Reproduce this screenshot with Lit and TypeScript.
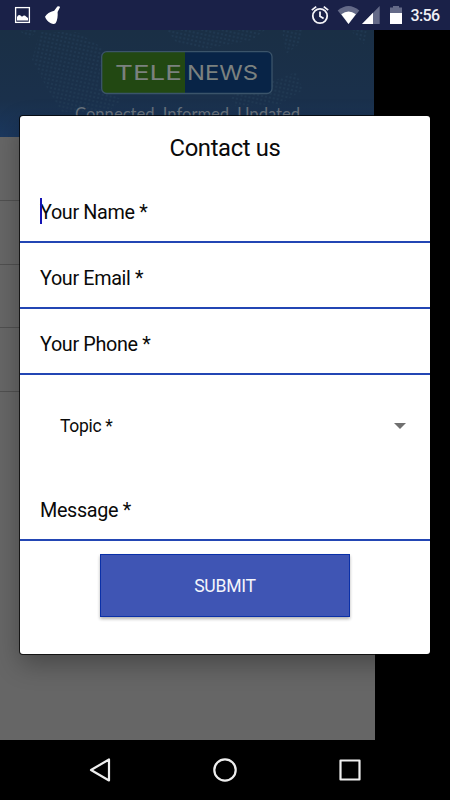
import { LitElement, html, css } from "lit";
import { customElement, property } from "lit/decorators.js";

@customElement("status-bar")
class StatusBar extends LitElement {
  static styles = css`
    :host { display: block; height: 30px; background: #1a2148; }
    svg { display: block; }
    .clock { font: 500 16px Roboto, sans-serif; fill: #f0f0f5; }
  `;
  render() {
    return html`<svg width="450" height="30" viewBox="0 0 450 30">
      <rect x="15.6" y="7.6" width="13.8" height="14.8" fill="none" stroke="#fff" stroke-width="1.3"/>
      <path d="M17 20.5V17Q18.5 13.8 20.5 15.5L22 16.8Q24.5 14.2 26 16.5L28 18V20.5Z" fill="#fff"/>
      <path d="M57.3 6.6Q59.6 5.4 60 7.3L57.6 12Q58.2 19 55.6 23.3Q53.8 24.8 50.8 23.2Q46.5 21 45 16.8Q47.5 12.2 54.2 10.7Z" fill="#fff"/>
      <g fill="none" stroke="#f4f4f8" stroke-width="1.8">
        <circle cx="320" cy="16" r="7.2"/>
        <path d="M320 11.5V16.2L323.6 18.6M311.8 10.1L316.2 6.6M323.8 6.6L328.2 10.1"/>
      </g>
      <path d="M337.7 10.6Q348.5 1.5 359.3 10.6L348.5 24Z" fill="#646a88"/>
      <path d="M341.3 14.2Q348.5 8.6 355.9 14.2L348.5 24Z" fill="#fff"/>
      <path d="M379.7 6V24H362Z" fill="#646a88"/>
      <path d="M373 12.8V24H362Z" fill="#fff"/>
      <path d="M390 13V7.5H393V6H399V7.5H402V13Z" fill="#646a88"/>
      <rect x="390" y="13" width="12" height="11" fill="#fff"/>
      <text class="clock" x="410.5" y="21" textLength="29.5">3:56</text>
    </svg>`;
  }
}

@customElement("brand-banner")
class BrandBanner extends LitElement {
  static styles = css`
    :host { display: block; height: 107px; background: linear-gradient(#1a2f45, #1a304b 65%, #1b385f); border-right: 1px solid #000; }
    svg { display: block; }
    .word { font: 400 20px Inter, Roboto, sans-serif; fill: #7b817f; }
    .tag { font: 400 17px Lato, Roboto, sans-serif; fill: #68727d; }
  `;
  render() {
    return html`<svg width="374" height="107" viewBox="0 0 374 107">
      <defs>
        <pattern id="dots" width="4" height="4" patternUnits="userSpaceOnUse" patternTransform="rotate(12)">
          <circle cx="2" cy="2" r="0.9" fill="#213b55"/>
        </pattern>
      </defs>
      <g fill="url(#dots)">
        <path d="M18 0H38L30 8ZM40 2H77L103 18L98 56L122 70L108 82H62L48 60L32 30Z"/>
        <path d="M167 0H265L252 10L205 19L176 12ZM230 66L260 56L296 42L303 60L280 74L235 76ZM282 0H303L298 15L286 24ZM350 0H367L364 14Z"/>
      </g>
      <rect x="102" y="22" width="83" height="42" rx="5" fill="#224812"/>
      <rect x="185" y="22" width="87" height="42" rx="5" fill="#082447"/>
      <rect x="178" y="22" width="7" height="42" fill="#224812"/>
      <rect x="185" y="22" width="7" height="42" fill="#082447"/>
      <rect x="101.7" y="21.7" width="170.3" height="41.8" rx="5" fill="none" stroke="#3b546a" stroke-width="1.3"/>
      <text class="word" x="115" y="50" textLength="67" lengthAdjust="spacingAndGlyphs">TELE</text>
      <text class="word" x="187" y="50" textLength="71" lengthAdjust="spacingAndGlyphs">NEWS</text>
      <text class="tag" x="75" y="89.5" textLength="229" lengthAdjust="spacingAndGlyphs">Connected. Informed. Updated.</text>
    </svg>`;
  }
}

@customElement("text-field")
class TextField extends LitElement {
  @property() label = "";
  @property({ type: Boolean }) active = false;
  static styles = css`
    :host { display: block; }
    .field {
      box-sizing: border-box; height: 66px; padding: 7px 20px 0;
      border-bottom: 2px solid #2346b4; position: relative;
      font: 400 19.8px/57px Roboto, sans-serif; letter-spacing: -0.35px; color: #0a0a0a;
    }
    .caret { position: absolute; left: 20px; top: 21px; width: 2px; height: 26px; background: #1414b4; }
  `;
  render() {
    return html`<div class="field">
      ${this.active ? html`<span class="caret"></span>` : ""}<span>${this.label}</span>
    </div>`;
  }
}

@customElement("contact-dialog")
class ContactDialog extends LitElement {
  static styles = css`
    :host {
      display: flex; flex-direction: column; width: 410px; height: 538px;
      background: #fff; border-radius: 3px; font-family: Roboto, sans-serif; color: #0a0a0a;
      box-shadow: 0 0 0 1px rgba(0, 0, 0, .75), 0 10px 26px rgba(0, 0, 0, .3);
    }
    .title { height: 61px; text-align: center; font-size: 23.8px; letter-spacing: -0.35px; line-height: 65px; }
    .select {
      display: flex; align-items: center; justify-content: space-between;
      height: 100px; padding: 2px 24px 0 40px; font-size: 17.5px; letter-spacing: -0.3px; box-sizing: border-box;
    }
    .arrow { width: 12px; height: 6px; background: #707070; clip-path: polygon(0 0, 100% 0, 50% 100%); }
    .submit {
      box-sizing: border-box; align-self: center; width: 250px; height: 63px; margin-top: 13px;
      background: #3f55b4; border: 1px solid #0a30a8; box-shadow: 0 2px 3px rgba(0, 0, 0, .3);
      color: #f4f5fb; font: 400 17.6px/63px Roboto, sans-serif; letter-spacing: -0.25px; text-align: center; padding: 0;
    }
  `;
  render() {
    return html`
      <div class="title">Contact us</div>
      <text-field label="Your Name *" active></text-field>
      <text-field label="Your Email *"></text-field>
      <text-field label="Your Phone *"></text-field>
      <div class="select"><span>Topic *</span><span class="arrow"></span></div>
      <text-field label="Message *"></text-field>
      <button class="submit">SUBMIT</button>`;
  }
}

@customElement("nav-bar")
class NavBar extends LitElement {
  static styles = css`
    :host { display: block; height: 60px; background: #000; }
    svg { display: block; }
  `;
  render() {
    return html`<svg width="450" height="60" viewBox="0 0 450 60" fill="none" stroke="#eee" stroke-width="2.2" stroke-linejoin="round">
      <path d="M109 19.5V40.5L91 30Z"/>
      <circle cx="225" cy="30" r="10.7"/>
      <rect x="340.5" y="20.5" width="19" height="19"/>
    </svg>`;
  }
}

@customElement("app-root")
class AppRoot extends LitElement {
  static styles = css`
    :host { display: flex; flex-direction: column; height: 800px; width: 450px; background: #000; overflow: hidden; position: relative; }
    .page { box-sizing: border-box; width: 375px; height: 710px; background: #666; }
    .row { box-sizing: border-box; height: 63.8px; border-bottom: 1px solid #505050; }
    .overlay { position: absolute; left: 20px; top: 116px; }
  `;
  render() {
    return html`
      <status-bar></status-bar>
      <div class="page">
        <brand-banner></brand-banner>
        ${[0, 1, 2, 3].map(() => html`<div class="row"></div>`)}
      </div>
      <nav-bar></nav-bar>
      <contact-dialog class="overlay"></contact-dialog>`;
  }
}
